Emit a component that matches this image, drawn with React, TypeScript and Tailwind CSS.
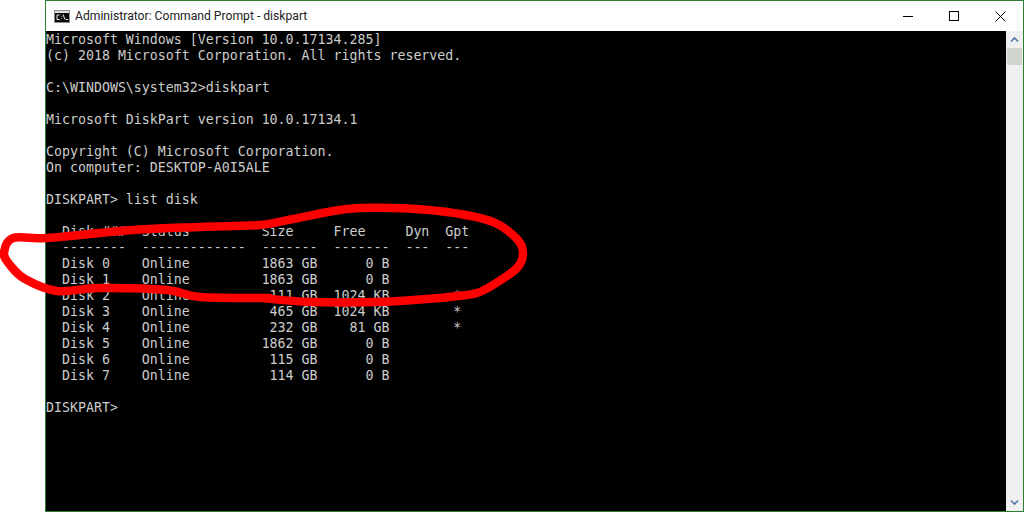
import React from 'react';

const lines = [
  'Microsoft Windows [Version 10.0.17134.285]',
  '(c) 2018 Microsoft Corporation. All rights reserved.',
  '',
  'C:\\WINDOWS\\system32>diskpart',
  '',
  'Microsoft DiskPart version 10.0.17134.1',
  '',
  'Copyright (C) Microsoft Corporation.',
  'On computer: DESKTOP-A0I5ALE',
  '',
  'DISKPART> list disk',
  '',
  '  Disk ###  Status         Size     Free     Dyn  Gpt',
  '  --------  -------------  -------  -------  ---  ---',
  '  Disk 0    Online         1863 GB      0 B',
  '  Disk 1    Online         1863 GB      0 B',
  '  Disk 2    Online          111 GB  1024 KB        *',
  '  Disk 3    Online          465 GB  1024 KB        *',
  '  Disk 4    Online          232 GB    81 GB        *',
  '  Disk 5    Online         1862 GB      0 B',
  '  Disk 6    Online          115 GB      0 B',
  '  Disk 7    Online          114 GB      0 B',
  '',
  'DISKPART>',
];

// hand-drawn circle round the first disks, traced from the screenshot
const scribble: [number, number][] = [
  [270, 298], [200, 297], [167, 290], [100, 288], [57, 291], [25, 279], [10, 265], [4, 253],
  [13, 238], [47, 238], [133, 230], [200, 227], [260, 225], [293, 219], [347, 209], [393, 208],
  [447, 212], [493, 222], [517, 239], [523, 253], [517, 268], [493, 285], [477, 293], [458, 296],
  [427, 299], [377, 302], [310, 302], [262, 298],
];

function smoothPath(pts: [number, number][]) {
  let d = `M${pts[0][0]} ${pts[0][1]}`;
  for (let i = 0; i < pts.length - 1; i++) {
    const p0 = pts[Math.max(i - 1, 0)];
    const p1 = pts[i];
    const p2 = pts[i + 1];
    const p3 = pts[Math.min(i + 2, pts.length - 1)];
    const c1x = p1[0] + (p2[0] - p0[0]) / 6;
    const c1y = p1[1] + (p2[1] - p0[1]) / 6;
    const c2x = p2[0] - (p3[0] - p1[0]) / 6;
    const c2y = p2[1] - (p3[1] - p1[1]) / 6;
    d += ` C${c1x} ${c1y} ${c2x} ${c2y} ${p2[0]} ${p2[1]}`;
  }
  return d;
}

function CmdIcon() {
  return (
    <svg width="16" height="13" viewBox="0 0 16 13" className="shrink-0">
      <rect x="0" y="0" width="16" height="13" fill="#8a8f94" />
      <rect x="1" y="3" width="14" height="9" fill="#0c0c0c" />
      <rect x="1" y="1" width="14" height="2" fill="#d8dde2" />
      <path d="M5.5 5H3v4.5h2.5M7.5 6v.6M7.5 8.5v.6M9 4.5l2 5M12 9.5h2" stroke="#f0f0f0" strokeWidth="1" fill="none" />
    </svg>
  );
}

export default function App() {
  return (
    <div className="relative w-[1024px] h-[512px] bg-white pl-[45px] overflow-hidden">
      <div className="h-full flex flex-col border border-[#2f7d32]">
        {/* Title bar */}
        <div className="h-[30px] flex items-center bg-white pl-[8px]">
          <CmdIcon />
          <span className="ml-[5px] text-[12.15px] text-[#222] font-['Roboto',sans-serif] whitespace-pre">
            Administrator: Command Prompt - diskpart
          </span>
          <div className="ml-auto flex h-full items-center">
            <div className="w-[46px] h-full flex items-center justify-center">
              <div className="w-[10px] h-px bg-black" />
            </div>
            <div className="w-[46px] h-full flex items-center justify-center">
              <div className="w-[10px] h-[10px] border border-black" />
            </div>
            <div className="w-[46px] h-full flex items-center justify-center">
              <svg width="11" height="11" viewBox="0 0 11 11">
                <path d="M0.5 0.5L10.5 10.5M10.5 0.5L0.5 10.5" stroke="#000" strokeWidth="1" fill="none" />
              </svg>
            </div>
          </div>
        </div>

        <div className="flex-1 flex min-h-0">
          {/* Console */}
          <div className="flex-1 bg-black pt-px text-[#cccccc] font-['DejaVu_Sans_Mono',monospace] text-[13.28px] leading-[16px] whitespace-pre">
            {lines.map((line, i) => (
              <div key={i} className="h-[16px]">
                {line}
              </div>
            ))}
          </div>

          {/* Scrollbar */}
          <div className="w-[17px] bg-[#f0f0f0] flex flex-col items-center">
            <div className="h-[17px] flex items-center justify-center">
              <svg width="9" height="7" viewBox="0 0 9 7">
                <path d="M1 5.5L4.5 2L8 5.5" stroke="#4f77a6" strokeWidth="1.6" fill="none" />
              </svg>
            </div>
            <div className="w-[15px] h-[17px] bg-[#d0d5d0]" />
            <div className="mt-auto h-[17px] flex items-center justify-center">
              <svg width="9" height="7" viewBox="0 0 9 7">
                <path d="M1 1.5L4.5 5L8 1.5" stroke="#4f77a6" strokeWidth="1.6" fill="none" />
              </svg>
            </div>
          </div>
        </div>
      </div>

      {/* Red marker annotation on top of the screenshot */}
      <svg width="1024" height="512" viewBox="0 0 1024 512" className="absolute inset-0 pointer-events-none">
        <path d={smoothPath(scribble)} stroke="#fe0000" strokeWidth="8.5" strokeLinecap="round" strokeLinejoin="round" fill="none" />
      </svg>
    </div>
  );
}
